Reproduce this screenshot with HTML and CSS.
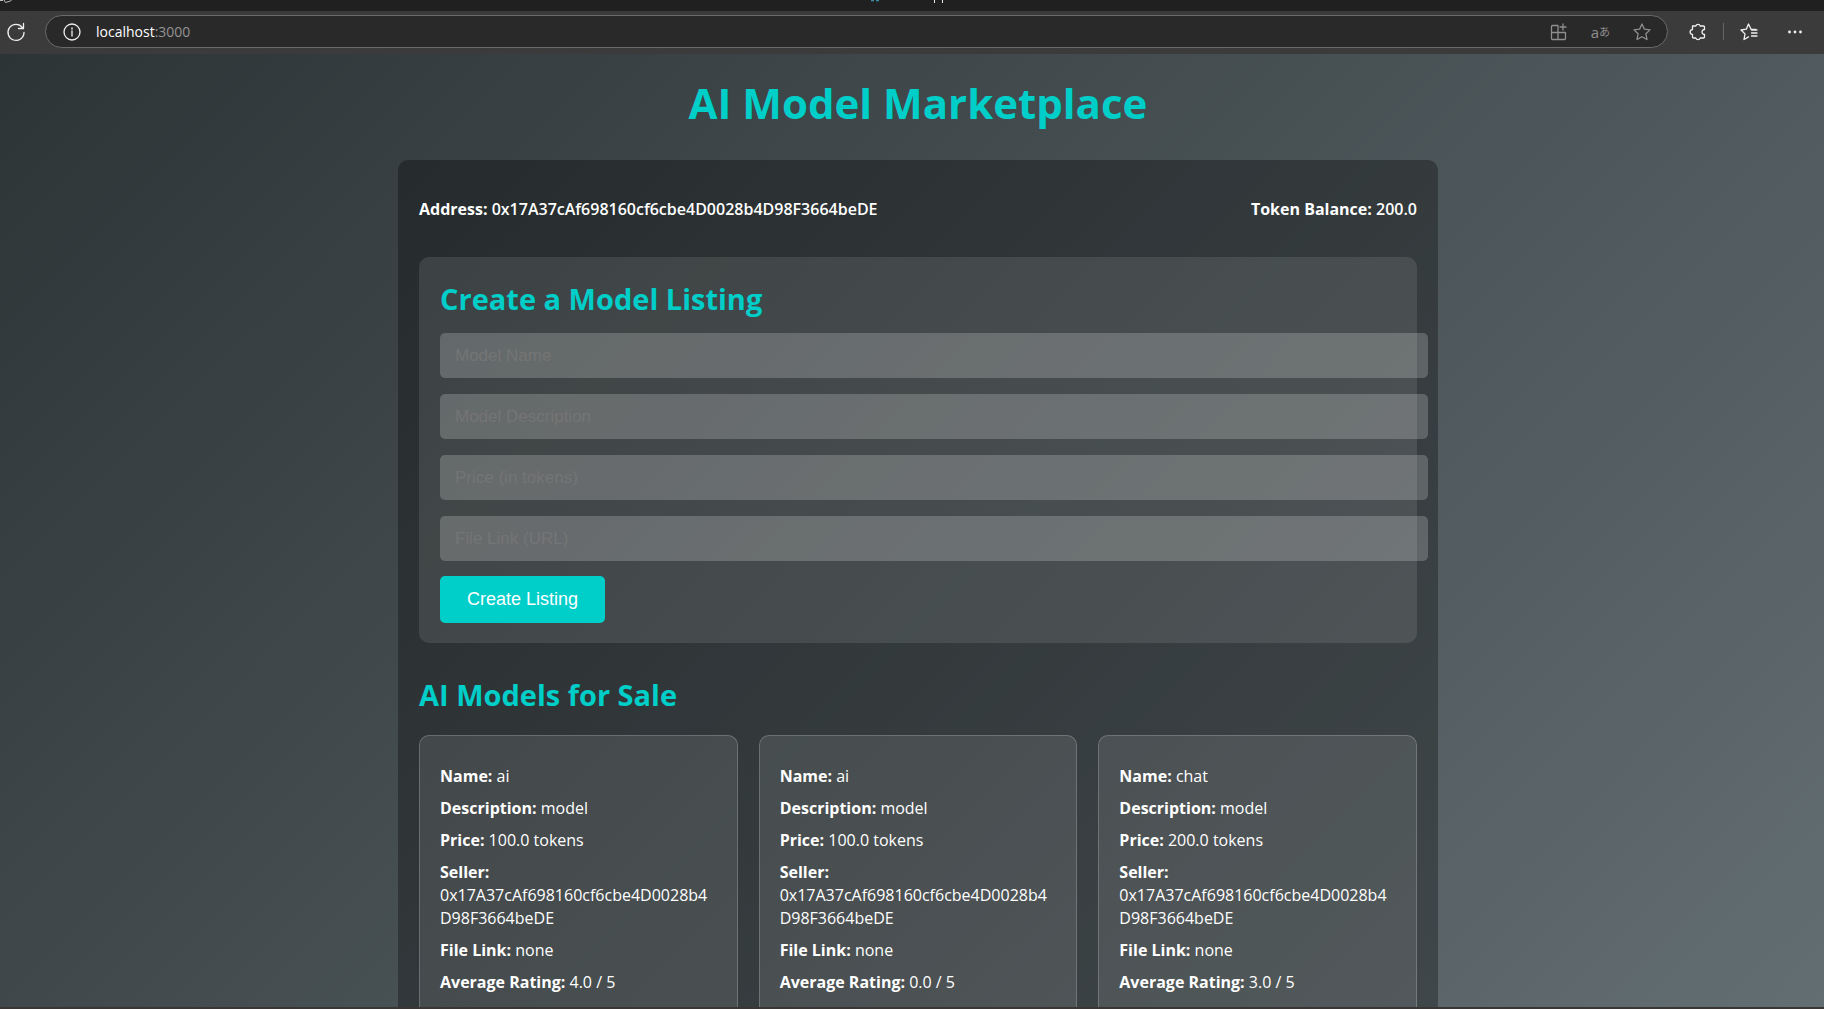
FILE: index.html
```html
<!DOCTYPE html>
<html lang="en">
<head>
<meta charset="utf-8">
<title>AI Model Marketplace</title>
<link rel="stylesheet" href="styles.css">
</head>
<body>
<div class="tab-strip">
  <svg width="14" height="4" viewBox="0 0 14 4" aria-hidden="true"><path d="M0 .5h3M4 0l1.500 2.500 5-1.500 1-1" fill="none" stroke="#bbb"/></svg>
  <svg width="76" height="4" viewBox="0 0 76 4" aria-hidden="true"><path d="M1 .500h3M6 .500h3" stroke="#3f8ea8" stroke-width="1.500"/><path d="M64.500 0v3M72.500 0v3" stroke="#e8e8e8"/></svg>
</div>
<header class="toolbar">
  <button class="icon-button" type="button" aria-label="Refresh">
    <svg width="20" height="20" viewBox="0 0 20 20" class="icon bright"><path d="M16.400 5.600A8 8 0 1 0 18 10.500M17.500 1.500V6.500H12.500"/></svg>
  </button>
  <div class="address-bar">
    <svg width="18" height="18" viewBox="0 0 18 18" class="icon bright" aria-hidden="true"><circle cx="9" cy="9" r="8"/><path d="M9 8v5M9 4.800v1.400"/></svg>
    <span class="url">localhost<span class="port">:3000</span></span>
    <button class="icon-button" type="button" aria-label="Apps">
      <svg width="18" height="18" viewBox="0 0 18 18" class="icon dim"><path d="M8 2.500H2.500a1 1 0 0 0-1 1V15.500a1 1 0 0 0 1 1H14.500a1 1 0 0 0 1-1V9.500H1.500M8 2.500V16.500M13 1v6M10 4h6"/></svg>
    </button>
    <button class="icon-button translate" type="button" aria-label="Translate">a<span class="kana">あ</span></button>
    <button class="icon-button" type="button" aria-label="Favorite">
      <svg width="18" height="18" viewBox="0 0 18 18" class="icon dim"><path d="M9 1l2.400 5.200 5.600.7-4.100 3.900 1.100 5.700L9 13.700l-5 2.800 1.100-5.700L1 6.900l5.600-.7z"/></svg>
    </button>
  </div>
  <div class="tools">
    <button class="icon-button" type="button" aria-label="Extensions">
      <svg width="18" height="18" viewBox="0 0 18 18" class="icon bright"><path d="M3.500 3H6.800a2.300 2.300 0 0 1 4.400 0H14.500q1 0 1 1V6.500A2.500 2.500 0 1 0 15.500 11.500V14q0 1-1 1H11.200a2.300 2.300 0 0 1-4.400 0H4.500q-1 0-1-1V11.400a2.400 2.400 0 0 1 0-4.800z"/></svg>
    </button>
    <span class="divider"></span>
    <button class="icon-button" type="button" aria-label="Favorites list">
      <svg width="18" height="18" viewBox="0 0 18 18" class="icon bright"><path d="M15.500 6.500H11.200L8.500 1 6.300 6.200 1 7l4 3.900L4 16.500l4.500-2.600M11.500 7h5.500M11.500 10h5.500M11.500 13h5.500"/></svg>
    </button>
    <button class="icon-button" type="button" aria-label="More">
      <svg width="18" height="18" viewBox="0 0 18 18" fill="#f0f0f0"><circle cx="3.500" cy="9" r="1.400"/><circle cx="9" cy="9" r="1.400"/><circle cx="14.500" cy="9" r="1.400"/></svg>
    </button>
  </div>
</header>
<div class="page">
  <h1>AI Model Marketplace</h1>
  <main class="container">
    <div class="account">
      <p><b>Address:</b> 0x17A37cAf698160cf6cbe4D0028b4D98F3664beDE</p>
      <p><b>Token Balance:</b> 200.0</p>
    </div>
    <form class="listing-form">
      <h2>Create a Model Listing</h2>
      <input type="text" placeholder="Model Name" aria-label="Model Name">
      <input type="text" placeholder="Model Description" aria-label="Model Description">
      <input type="text" placeholder="Price (in tokens)" aria-label="Price (in tokens)">
      <input type="text" placeholder="File Link (URL)" aria-label="File Link (URL)">
      <button class="submit" type="button">Create Listing</button>
    </form>
    <h2 class="sale-title">AI Models for Sale</h2>
    <div class="models">
      <article class="model">
        <p><b>Name:</b> ai</p>
        <p><b>Description:</b> model</p>
        <p><b>Price:</b> 100.0 tokens</p>
        <p><b>Seller:</b> <span class="hash">0x17A37cAf698160cf6cbe4D0028b4<wbr>D98F3664beDE</span></p>
        <p><b>File Link:</b> none</p>
        <p><b>Average Rating:</b> 4.0 / 5</p>
      </article>
      <article class="model">
        <p><b>Name:</b> ai</p>
        <p><b>Description:</b> model</p>
        <p><b>Price:</b> 100.0 tokens</p>
        <p><b>Seller:</b> <span class="hash">0x17A37cAf698160cf6cbe4D0028b4<wbr>D98F3664beDE</span></p>
        <p><b>File Link:</b> none</p>
        <p><b>Average Rating:</b> 0.0 / 5</p>
      </article>
      <article class="model">
        <p><b>Name:</b> chat</p>
        <p><b>Description:</b> model</p>
        <p><b>Price:</b> 200.0 tokens</p>
        <p><b>Seller:</b> <span class="hash">0x17A37cAf698160cf6cbe4D0028b4<wbr>D98F3664beDE</span></p>
        <p><b>File Link:</b> none</p>
        <p><b>Average Rating:</b> 3.0 / 5</p>
      </article>
    </div>
  </main>
</div>
</body>
</html>
```
FILE: styles.css
```css
* { box-sizing: border-box; }

body {
  margin: 0;
  height: 100vh;
  display: flex;
  flex-direction: column;
  overflow: hidden;
  background: #3a3636;
  color: #fff;
  font: 16px/23px "Open Sans", "Noto Sans", sans-serif;
}

h1, h2, p { margin: 0; }

/* Browser frame */
.tab-strip {
  flex: none;
  height: 11px;
  background: #202020;
  display: grid;
  grid-template-columns: 1fr 84px 1fr;
}

.toolbar {
  flex: none;
  height: 43px;
  display: flex;
  align-items: center;
  gap: 17px;
  padding: 0 20px 2px 6px;
  background: #3b3b3b;
}
.icon-button {
  display: flex;
  align-items: center;
  padding: 0;
  border: 0;
  background: none;
}
.icon { fill: none; stroke-width: 1.3; stroke-linejoin: round; stroke-linecap: round; }
.bright { stroke: #f0f0f0; }
.dim { stroke: #8f8f8f; }

.address-bar {
  flex: 1;
  height: 33px;
  margin-left: 2px;
  display: flex;
  align-items: center;
  gap: 23px;
  padding: 0 16px 0 17px;
  border: 1px solid #6b6b6b;
  border-radius: 17px;
  background: #292929;
}
.url {
  flex: 1;
  margin-left: -8px;
  font-size: 14px;
  line-height: 20px;
}
.port { color: #939393; }
.translate {
  color: #8f8f8f;
  font: 15px/18px "Open Sans", "Noto Sans CJK JP", sans-serif;
}
.kana { font-size: 11px; }

.tools { display: flex; align-items: center; gap: 16px; margin-left: 4px; }
.tools .icon-button:last-child { margin-left: 12px; }
.divider { width: 1px; height: 17px; background: #666; }

/* Marketplace page */
.page {
  flex: 1;
  min-height: 0;
  margin-bottom: 2px;
  padding: 20px 0 0 12px;
  overflow: hidden;
  background: linear-gradient(135deg, #2d3436, #636e72);
}
h1 {
  margin-bottom: 28px;
  color: #00cec9;
  font-size: 42px;
  line-height: 58px;
  text-align: center;
}
h2 {
  color: #00cec9;
  font-size: 29px;
  line-height: 40px;
}

.container {
  max-width: 1040px;
  margin: 0 auto;
  padding: 21px;
  border-radius: 10px;
  background: rgba(0, 0, 0, 0.3);
}
.account {
  display: flex;
  justify-content: space-between;
  padding: 17px 0 36px;
  font-weight: 600;
}
b { font-weight: 700; }

.listing-form {
  display: flex;
  flex-direction: column;
  align-items: flex-start;
  gap: 16px;
  padding: 22px 21px 20px;
  border-radius: 10px;
  background: rgba(255, 255, 255, 0.1);
}
.listing-form h2 { margin-bottom: -2px; }
.listing-form input {
  box-sizing: content-box;
  width: 100%;
  height: 45px;
  padding: 0 17px 0 15px;
  border: 0;
  border-radius: 5px;
  background: rgba(255, 255, 255, 0.2);
  color: #fff;
  font: 17px "Liberation Sans", Arial, sans-serif;
}
.listing-form input::placeholder { color: #757575; }
.submit {
  height: 47px;
  margin-top: -1px;
  padding: 0 27px;
  border: 0;
  border-radius: 5px;
  background: #00cec9;
  color: #fff;
  font: 18px "Liberation Sans", Arial, sans-serif;
}

.sale-title { margin: 32px 0 20px; }
.models {
  display: grid;
  grid-template-columns: repeat(3, 1fr);
  gap: 21px;
}
.model {
  display: flex;
  flex-direction: column;
  gap: 9px;
  padding: 29px 20px 64px;
  border: 1px solid rgba(255, 255, 255, 0.2);
  border-radius: 10px;
  background: rgba(255, 255, 255, 0.1);
}
.hash { display: block; }
```
